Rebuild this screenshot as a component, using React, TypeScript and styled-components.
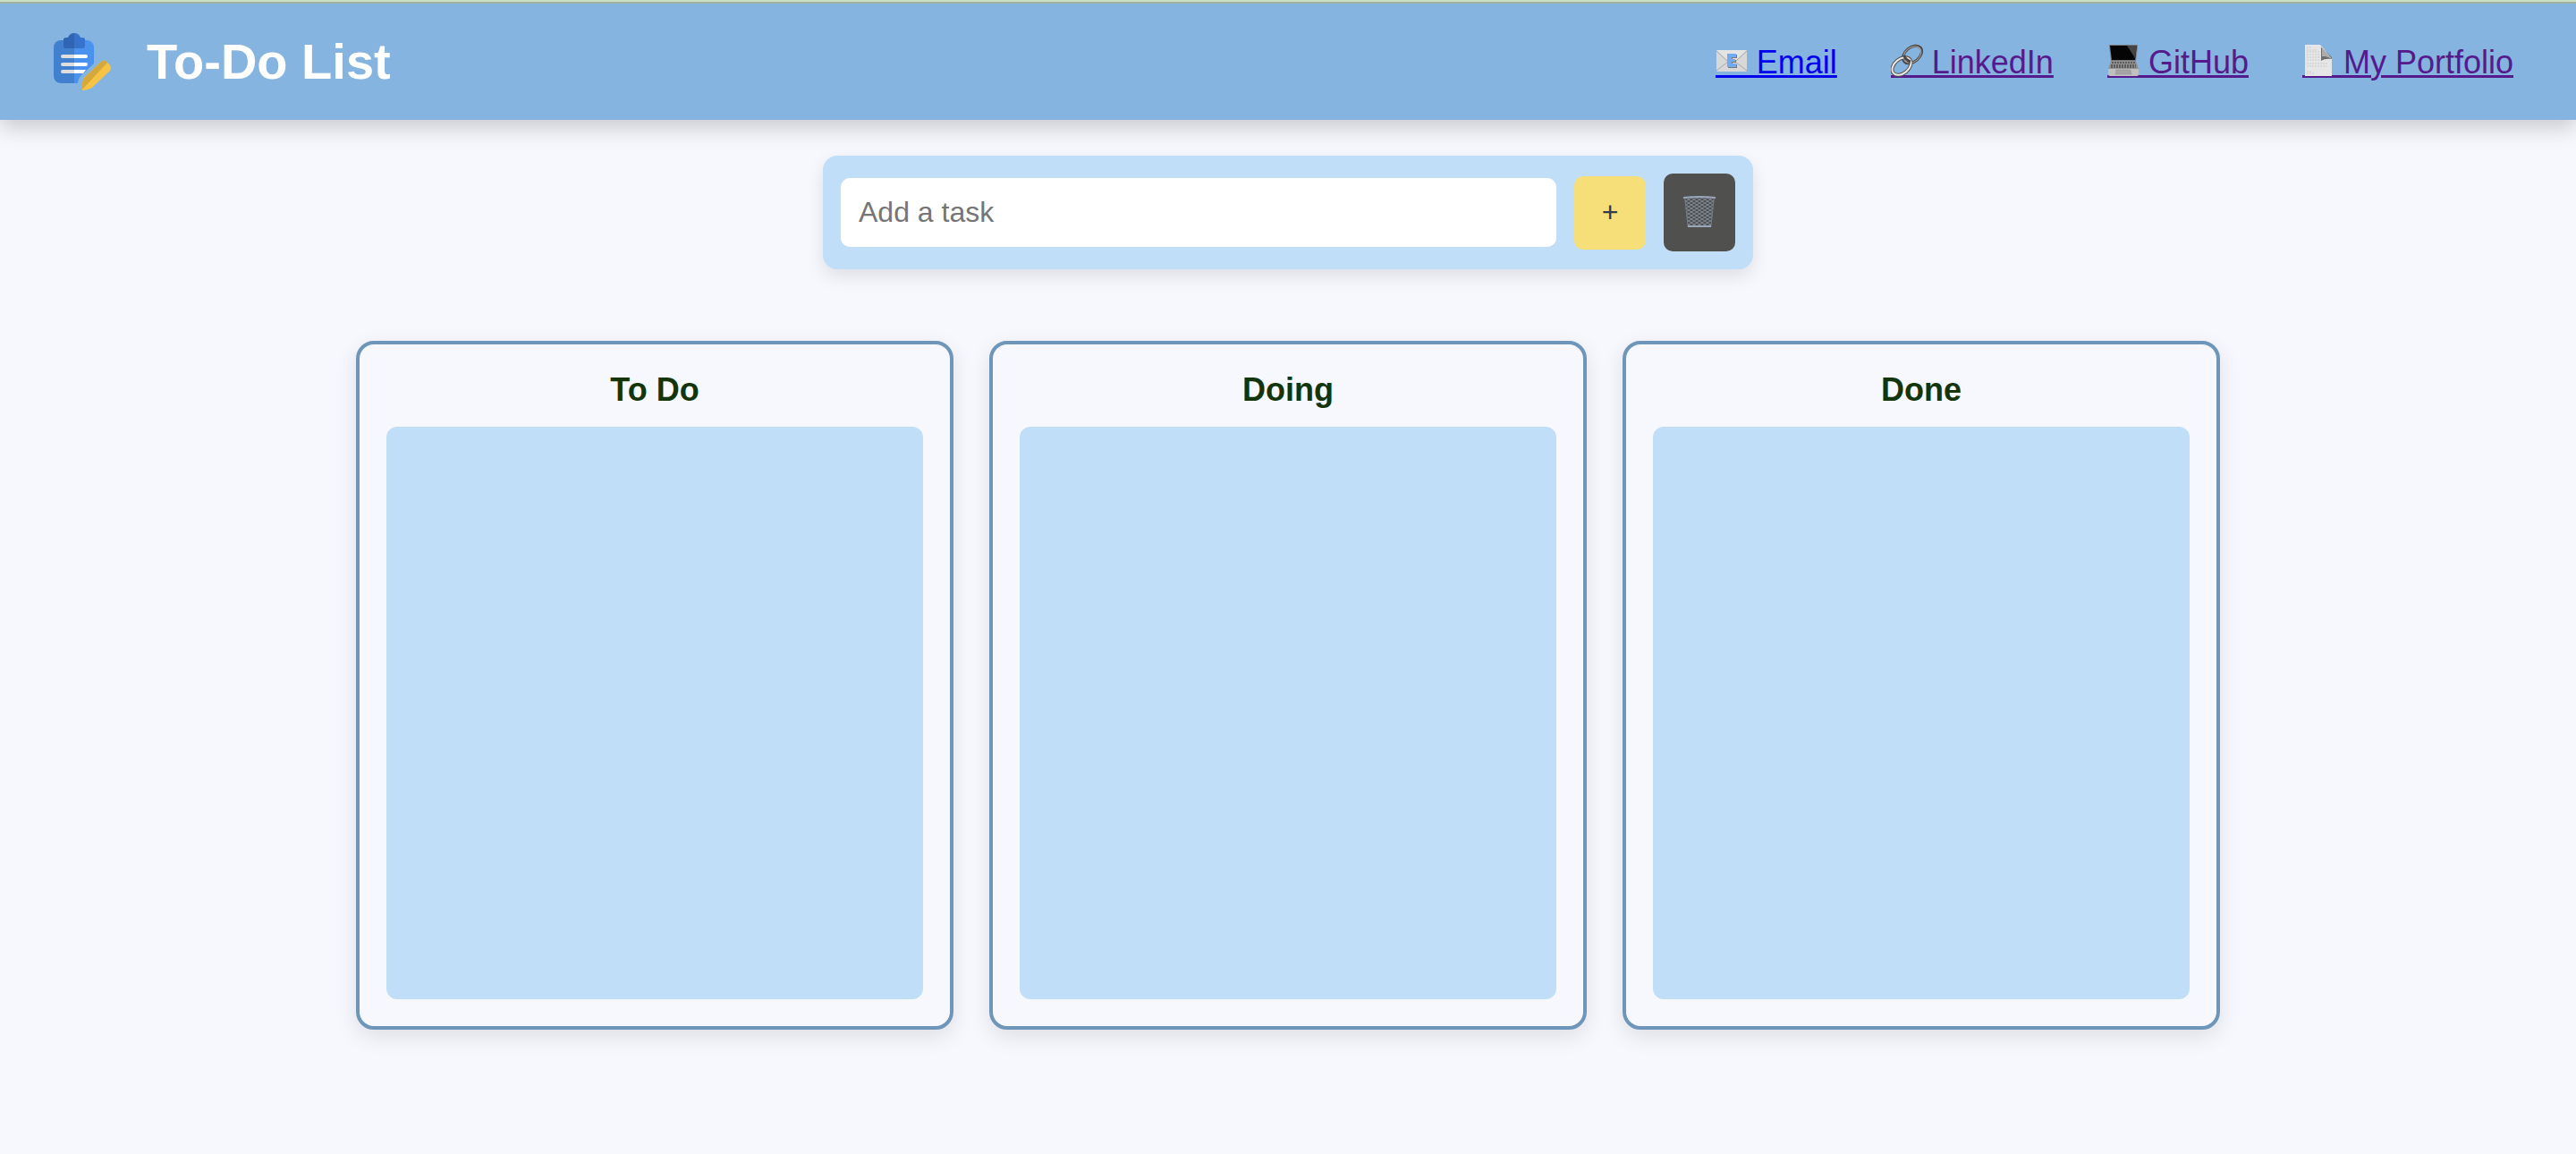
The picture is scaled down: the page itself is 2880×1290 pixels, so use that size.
import React, { useState } from "react";
import styled, { createGlobalStyle } from "styled-components";

const GlobalStyle = createGlobalStyle`
  *, *::before, *::after { box-sizing: border-box; }
  body {
    margin: 0;
    min-height: 100vh;
    background: #f6f8fe;
    font-family: "Liberation Sans", Arial, Helvetica, sans-serif;
  }
  h1, h2 { margin: 0; }
`;

const Header = styled.header`
  display: flex;
  align-items: center;
  justify-content: space-between;
  padding: 32px 70px 30px 58px;
  border-top: 2px solid #c9dfc1;
  background: #84b4df;
  box-shadow: inset 0 2px 0 #a1b3a0, 0 8px 24px rgba(0, 0, 0, 0.2);
`;

const Brand = styled.div`
  display: flex;
  align-items: center;
  gap: 38px;
  color: #fff;
`;

const Title = styled.h1`
  font-size: 56px;
  line-height: 70px;
`;

const Nav = styled.nav`
  display: flex;
  gap: 60px;
  font-size: 36px;
  line-height: 42px;
`;

const NavLink = styled.a<{ $visited?: boolean }>`
  color: ${(p) => (p.$visited ? "#551a8b" : "#0000ee")};
  text-decoration-thickness: 3px;
  text-underline-offset: 2px;
  white-space: nowrap;
`;

const Glyph = styled.svg`
  width: 36px;
  height: 42px;
  vertical-align: -7px;
`;

const Main = styled.main`
  display: flex;
  flex-direction: column;
  align-items: center;
  gap: 80px;
  padding: 40px 40px 80px;
`;

const TaskForm = styled.form`
  display: flex;
  align-items: center;
  gap: 20px;
  width: 100%;
  max-width: 1040px;
  padding: 20px;
  border-radius: 16px;
  background: #c0def8;
  box-shadow: 0 8px 20px rgba(0, 0, 0, 0.1);
`;

const TaskInput = styled.input`
  flex: 1;
  min-width: 0;
  padding: 20px;
  border: 0;
  border-radius: 10px;
  background: #fff;
  color: #2c3e50;
  font: inherit;
  font-size: 32px;
  line-height: 37px;
  &::placeholder { color: #757575; }
`;

const FormButton = styled.button<{ $dark?: boolean }>`
  display: flex;
  align-items: center;
  justify-content: center;
  width: 80px;
  height: ${(p) => (p.$dark ? 87 : 82)}px;
  padding: 0;
  border: 0;
  border-radius: 10px;
  background: ${(p) => (p.$dark ? "#50504e" : "#f6df78")};
  color: #2c3e50;
  font: inherit;
  font-size: 32px;
  cursor: pointer;
`;

const Board = styled.div`
  display: grid;
  grid-template-columns: repeat(3, minmax(0, 1fr));
  gap: 40px;
  width: 100%;
  max-width: 2084px;
`;

const Column = styled.section`
  padding: 30px;
  border: 4px solid #6d96ba;
  border-radius: 20px;
  background: #f6f8fe;
  box-shadow: 0 8px 24px rgba(0, 0, 0, 0.1);
`;

const ColumnTitle = styled.h2`
  margin-bottom: 20px;
  color: #143409;
  font-size: 36px;
  line-height: 42px;
  text-align: center;
`;

const TaskList = styled.ul`
  min-height: 640px;
  margin: 0;
  padding: 0;
  border-radius: 12px;
  background: #c0def8;
  list-style: none;
`;

const Logo = () => (
  <svg width="68" height="68" viewBox="0 0 68 68" aria-hidden="true">
    <path d="M10 10h25v48H10a8 8 0 0 1-8-8V18a8 8 0 0 1 8-8z" fill="#4180cf" />
    <path d="M25 10h14a8 8 0 0 1 8 8v18L33 49q-4 4-4 9h-4z" fill="#4993ee" />
    <path d="M29 58q0-5 4-9l2-2v11z" fill="#84b4df" />
    <path d="M25 2v17H16a3 3 0 0 1-3-3V9q0-2 3-2h2q2-5 7-5z" fill="#3065b3" />
    <path d="M25 2v17h9a3 3 0 0 0 3-3V9q0-2-3-2h-2q-2-5-7-5z" fill="#3773cb" />
    <path d="M25 26H12a2 2 0 0 0 0 4h13zm0 9H12a2 2 0 0 0 0 4h13zm0 8H12a2 2 0 0 0 0 4h13z" fill="#dedede" />
    <path d="M25 26h13a2 2 0 0 1 0 4H25zm0 9h13a2 2 0 0 1 0 4H25zm0 8h13l-3 4H25z" fill="#fff" />
    <path d="M36 52l19-18q3-3 6 0l4 4q2 3 0 6L46 62q-3 3-12 4-1-8 2-14z" fill="#f6c344" />
    <path d="M36 52l19-18q3-3 6 0l1 1L34 65q-1-7 2-13z" fill="#d5a83b" />
  </svg>
);

const EmailGlyph = () => (
  <Glyph viewBox="0 1 36 42" aria-hidden="true">
    <rect y="38" width="36" height="3" fill="#0000ee" />
    <rect x="1" y="10" width="34" height="24" rx="1" fill="#d8d8d8" />
    <path d="M1 10h34L18 25z" fill="#e4e4e4" />
    <path d="M1 11L14 23 1 33M35 11L22 23l13 10" fill="none" stroke="#a9a9a9" />
    <path d="M14 15h10v4h-5v2h4v3h-4v2h5v4H14z" fill="#777" />
    <path d="M13 14h10v4h-5v2h4v3h-4v2h5v4H13z" fill="#72aaf0" />
  </Glyph>
);

const ChainGlyph = () => (
  <Glyph viewBox="0 1 36 42" aria-hidden="true">
    <rect y="38" width="36" height="3" fill="#551a8b" />
    <g fill="none">
      <ellipse cx="24" cy="15" rx="12" ry="8" transform="rotate(-40 24 15)" stroke="#4b4543" strokeWidth="3" />
      <ellipse cx="24" cy="15" rx="11" ry="8" transform="rotate(-40 24 15)" stroke="#aaa5a3" />
      <ellipse cx="12" cy="28" rx="12" ry="8" transform="rotate(-40 12 28)" stroke="#55504d" strokeWidth="4" />
      <ellipse cx="12" cy="28" rx="12" ry="8" transform="rotate(-40 12 28)" stroke="#e8e8e8" strokeWidth="2" />
      <path d="M15 16q1 5 7 7" stroke="#4b4543" strokeWidth="3" />
    </g>
  </Glyph>
);

const LaptopGlyph = () => (
  <Glyph viewBox="0 1 36 42" aria-hidden="true">
    <rect y="38" width="36" height="3" fill="#551a8b" />
    <path d="M2 4h32l-2 18H4z" fill="#77777a" />
    <path d="M3 5h30l-2 16H5z" fill="#050505" />
    <path d="M22 5h11l-2 14z" fill="#444" />
    <path d="M4 22h28l3 9H1z" fill="#929292" />
    <path d="M5 24h26M4 27h28M4 29h28" stroke="#4c4c4c" strokeDasharray="2 1" strokeWidth="1.6" />
    <path d="M1 31h34v6q0 2-2 2H3q-2 0-2-2z" fill="#c0c0c0" />
    <path d="M10 32h16l1 5H9z" fill="#a5a5a5" stroke="#929292" strokeWidth="0.5" />
  </Glyph>
);

const PageGlyph = () => (
  <Glyph viewBox="0 1 36 42" aria-hidden="true">
    <rect y="38" width="36" height="3" fill="#551a8b" />
    <path d="M3 4h17l13 16v19H3z" fill="#e6e6e6" />
    <path d="M5 7h6M5 10h12M5 12h14M5 15h14M5 18h14M5 21h15M5 25h24M5 28h22M5 34h5M5 36h9" stroke="#cacaca" strokeDasharray="2 1" />
    <path d="M21 6v16q4-3 12-2v-2z" fill="#6d6d6d" />
    <path d="M19 4q5 3 3 13 6-1 11 3L23 7z" fill="#dcdcdc" />
    <path d="M22 7v10q6-1 11 3z" fill="#ababab" />
  </Glyph>
);

const TrashGlyph = () => (
  <svg width="36" height="38" viewBox="0 0 36 38" aria-hidden="true">
    <defs>
      <pattern id="mesh" width="6" height="4" patternUnits="userSpaceOnUse">
        <path d="M0 0l6 4M6 0L0 4" stroke="#858b93" />
      </pattern>
    </defs>
    <path d="M1 2h34l-4 33H5z" fill="#4c4f53" />
    <path d="M1 2h34l-4 33H5z" fill="url(#mesh)" />
    <path d="M2 3l3 31M34 3l-3 31" stroke="#727a83" />
    <path d="M0 2q18-2 36 0M5 34h26" fill="none" stroke="#98a6b8" strokeWidth="2" />
  </svg>
);

const links = [
  { label: "Email", href: "mailto:me@example.com", visited: false, Icon: EmailGlyph },
  { label: "LinkedIn", href: "#linkedin", visited: true, Icon: ChainGlyph },
  { label: "GitHub", href: "#github", visited: true, Icon: LaptopGlyph },
  { label: "My Portfolio", href: "#portfolio", visited: true, Icon: PageGlyph },
];

const columns = ["To Do", "Doing", "Done"];

export default function App() {
  const [draft, setDraft] = useState("");
  const [tasks, setTasks] = useState<string[]>([]);

  const addTask = (e: React.FormEvent) => {
    e.preventDefault();
    if (!draft.trim()) return;
    setTasks([...tasks, draft.trim()]);
    setDraft("");
  };

  return (
    <>
      <GlobalStyle />
      <Header>
        <Brand>
          <Logo />
          <Title>To-Do List</Title>
        </Brand>
        <Nav>
          {links.map(({ label, href, visited, Icon }) => (
            <NavLink key={label} href={href} $visited={visited}>
              <Icon />
              {" " + label}
            </NavLink>
          ))}
        </Nav>
      </Header>
      <Main>
        <TaskForm onSubmit={addTask}>
          <TaskInput
            aria-label="Add a task"
            placeholder="Add a task"
            value={draft}
            onChange={(e) => setDraft(e.target.value)}
          />
          <FormButton type="submit">+</FormButton>
          <FormButton type="button" $dark aria-label="Clear tasks" onClick={() => setTasks([])}>
            <TrashGlyph />
          </FormButton>
        </TaskForm>
        <Board>
          {columns.map((name, i) => (
            <Column key={name}>
              <ColumnTitle>{name}</ColumnTitle>
              <TaskList>{i === 0 && tasks.map((t, n) => <li key={n}>{t}</li>)}</TaskList>
            </Column>
          ))}
        </Board>
      </Main>
    </>
  );
}
